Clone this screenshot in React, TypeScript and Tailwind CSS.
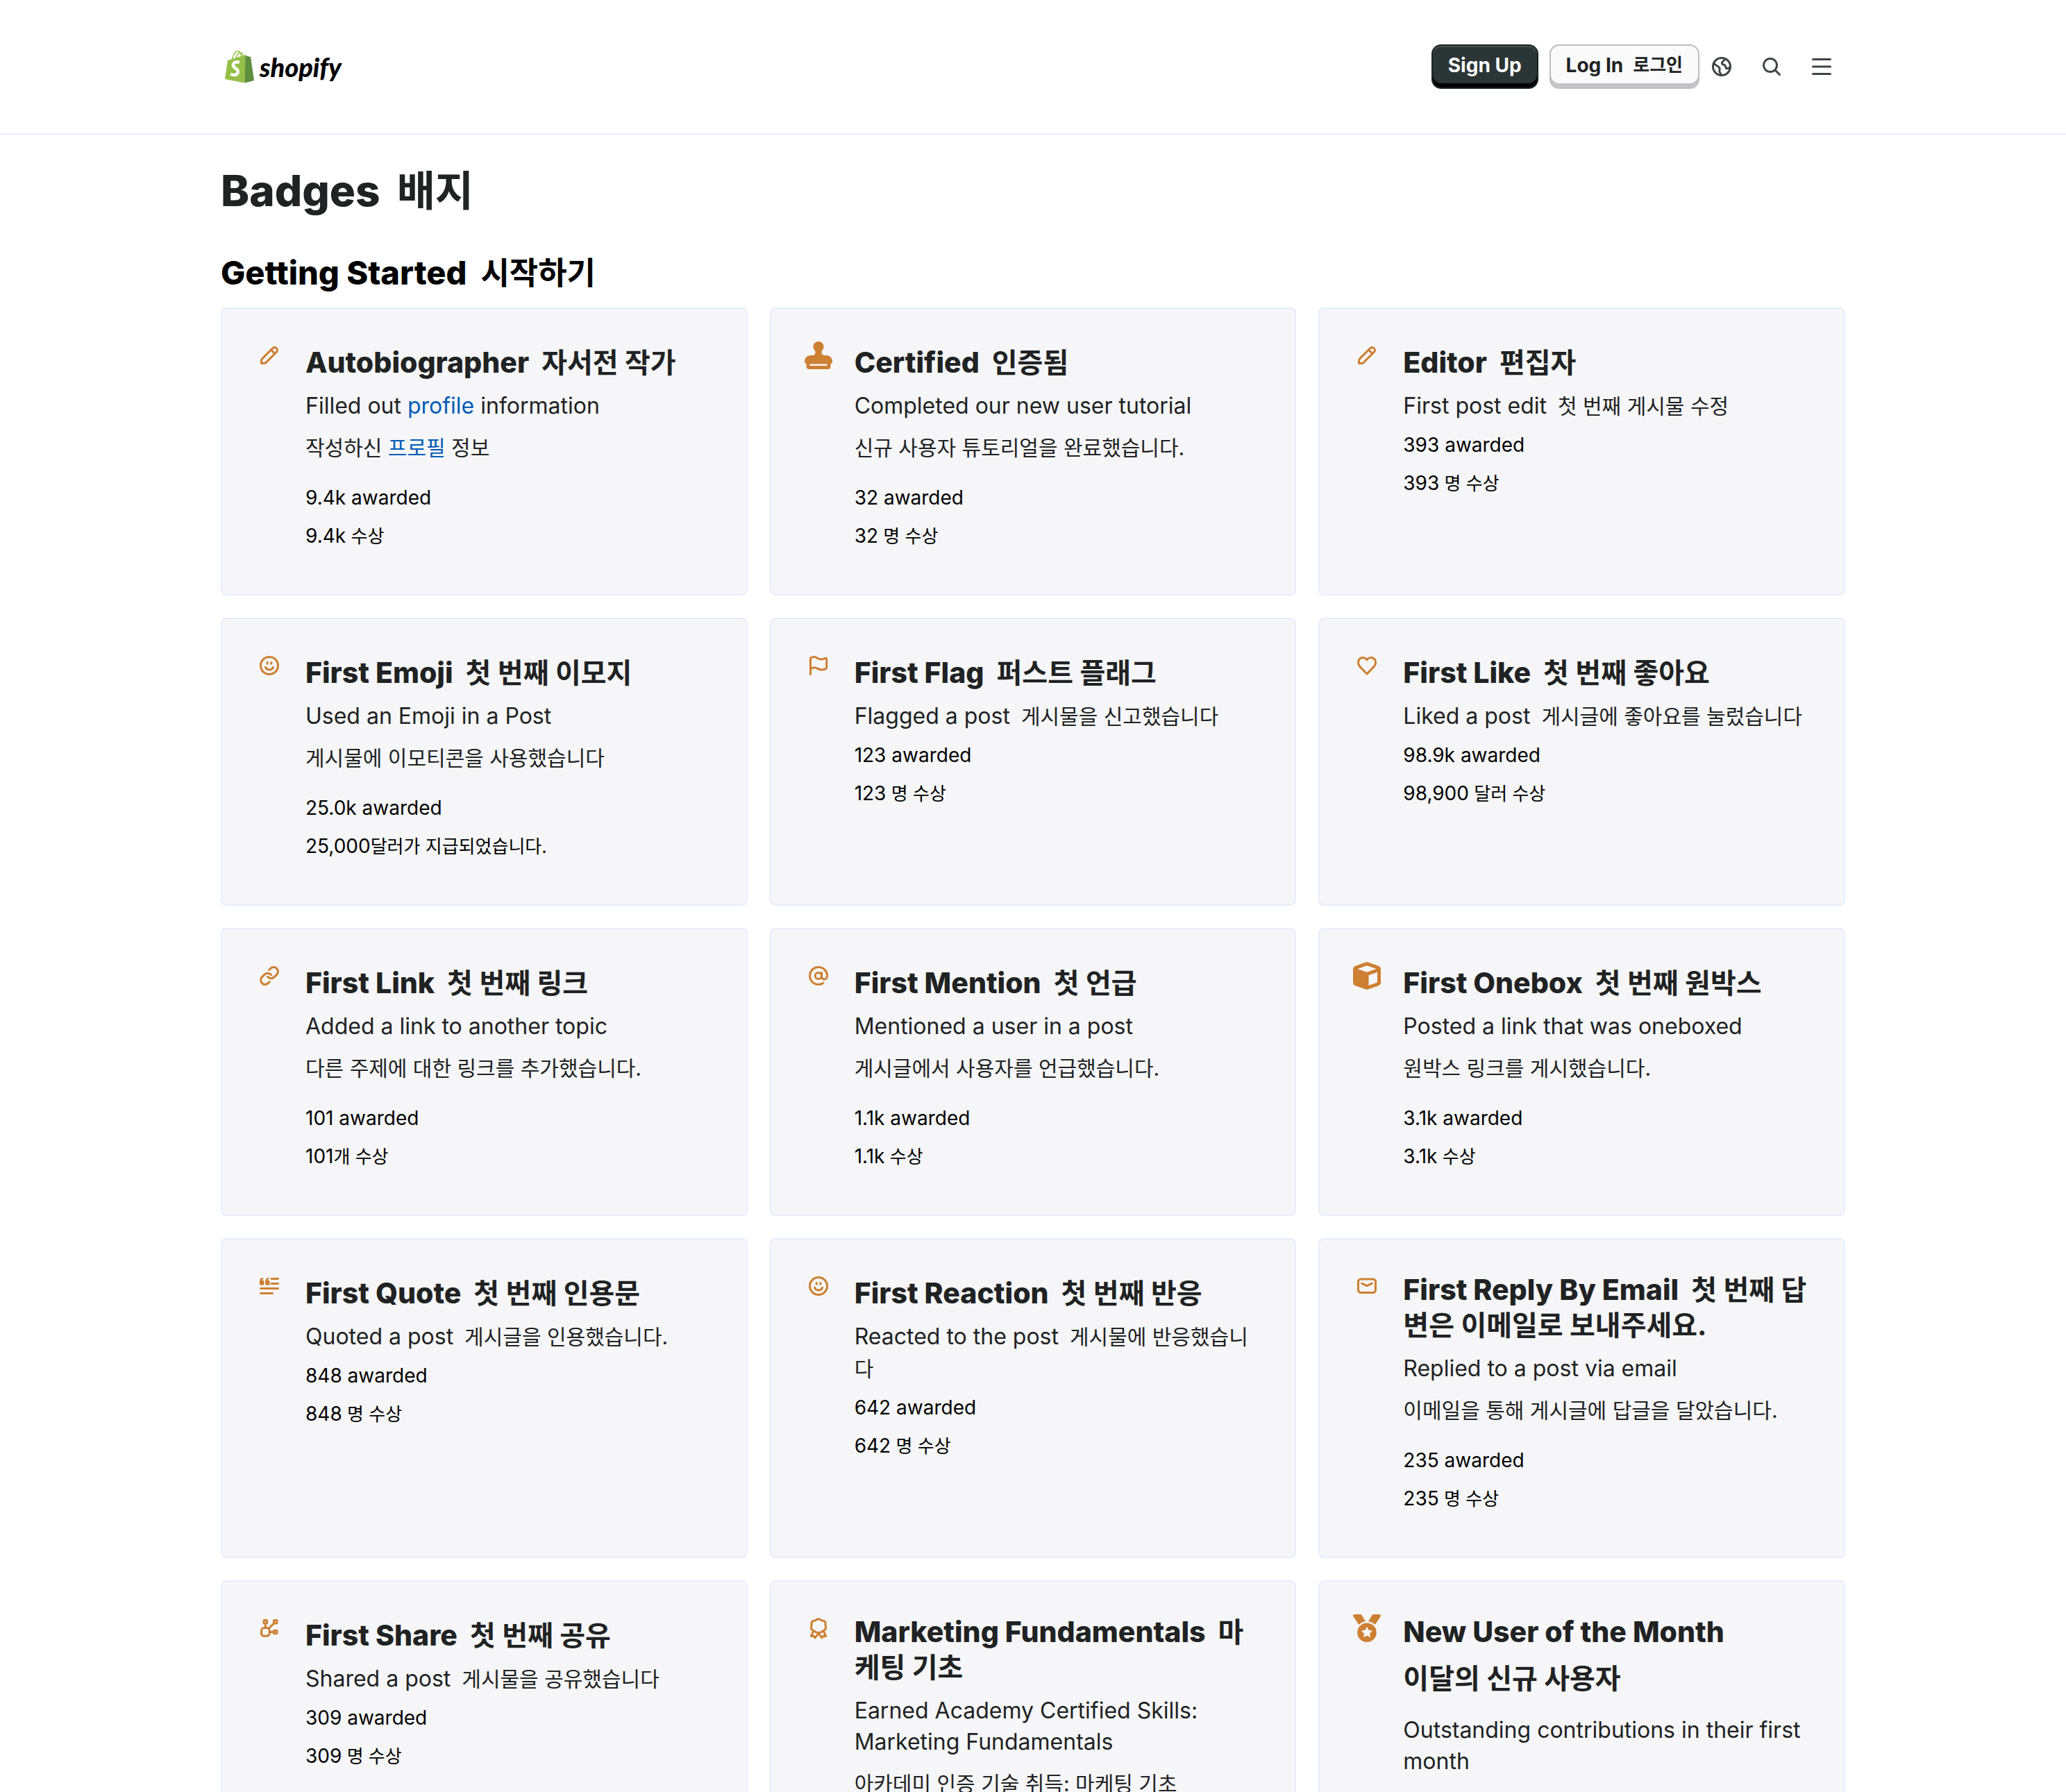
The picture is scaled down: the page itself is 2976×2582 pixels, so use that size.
import type { ReactNode } from "react";
import { FaCube, FaMedal, FaStamp } from "react-icons/fa6";

type IconName =
  | "pencil"
  | "stamp"
  | "smile"
  | "flag"
  | "heart"
  | "link"
  | "at"
  | "cube"
  | "quote"
  | "email"
  | "share"
  | "award"
  | "medal";

interface Badge {
  icon: IconName;
  title: string;
  titleKo: string;
  titleBlock?: boolean;
  text: ReactNode;
  textKo?: ReactNode;
  // translation sits in its own paragraph instead of following the text
  textBlock?: boolean;
  count?: string;
  countKo?: string;
  unitKo?: string;
}

const badges: Badge[] = [
  {
    icon: "pencil",
    title: "Autobiographer",
    titleKo: "자서전 작가",
    text: (
      <>
        Filled out <a href="#profile" className="text-[#005bb5]">profile</a> information
      </>
    ),
    textKo: (
      <>
        작성하신 <a href="#profile" className="text-[#005bb5]">프로필</a> 정보
      </>
    ),
    textBlock: true,
    count: "9.4k",
    unitKo: " 수상",
  },
  {
    icon: "stamp",
    title: "Certified",
    titleKo: "인증됨",
    text: "Completed our new user tutorial",
    textKo: "신규 사용자 튜토리얼을 완료했습니다.",
    textBlock: true,
    count: "32",
    unitKo: " 명 수상",
  },
  {
    icon: "pencil",
    title: "Editor",
    titleKo: "편집자",
    text: "First post edit",
    textKo: "첫 번째 게시물 수정",
    count: "393",
    unitKo: " 명 수상",
  },
  {
    icon: "smile",
    title: "First Emoji",
    titleKo: "첫 번째 이모지",
    text: "Used an Emoji in a Post",
    textKo: "게시물에 이모티콘을 사용했습니다",
    textBlock: true,
    count: "25.0k",
    countKo: "25,000",
    unitKo: "달러가 지급되었습니다.",
  },
  {
    icon: "flag",
    title: "First Flag",
    titleKo: "퍼스트 플래그",
    text: "Flagged a post",
    textKo: "게시물을 신고했습니다",
    count: "123",
    unitKo: " 명 수상",
  },
  {
    icon: "heart",
    title: "First Like",
    titleKo: "첫 번째 좋아요",
    text: "Liked a post",
    textKo: "게시글에 좋아요를 눌렀습니다",
    count: "98.9k",
    countKo: "98,900",
    unitKo: " 달러 수상",
  },
  {
    icon: "link",
    title: "First Link",
    titleKo: "첫 번째 링크",
    text: "Added a link to another topic",
    textKo: "다른 주제에 대한 링크를 추가했습니다.",
    textBlock: true,
    count: "101",
    unitKo: "개 수상",
  },
  {
    icon: "at",
    title: "First Mention",
    titleKo: "첫 언급",
    text: "Mentioned a user in a post",
    textKo: "게시글에서 사용자를 언급했습니다.",
    textBlock: true,
    count: "1.1k",
    unitKo: " 수상",
  },
  {
    icon: "cube",
    title: "First Onebox",
    titleKo: "첫 번째 원박스",
    text: "Posted a link that was oneboxed",
    textKo: "원박스 링크를 게시했습니다.",
    textBlock: true,
    count: "3.1k",
    unitKo: " 수상",
  },
  {
    icon: "quote",
    title: "First Quote",
    titleKo: "첫 번째 인용문",
    text: "Quoted a post",
    textKo: "게시글을 인용했습니다.",
    count: "848",
    unitKo: " 명 수상",
  },
  {
    icon: "smile",
    title: "First Reaction",
    titleKo: "첫 번째 반응",
    text: "Reacted to the post",
    textKo: "게시물에 반응했습니다",
    count: "642",
    unitKo: " 명 수상",
  },
  {
    icon: "email",
    title: "First Reply By Email",
    titleKo: "첫 번째 답변은 이메일로 보내주세요.",
    text: "Replied to a post via email",
    textKo: "이메일을 통해 게시글에 답글을 달았습니다.",
    textBlock: true,
    count: "235",
    unitKo: " 명 수상",
  },
  {
    icon: "share",
    title: "First Share",
    titleKo: "첫 번째 공유",
    text: "Shared a post",
    textKo: "게시물을 공유했습니다",
    count: "309",
    unitKo: " 명 수상",
  },
  {
    icon: "award",
    title: "Marketing Fundamentals",
    titleKo: "마케팅 기초",
    text: "Earned Academy Certified Skills: Marketing Fundamentals",
    textKo: "아카데미 인증 기술 취득: 마케팅 기초",
    textBlock: true,
  },
  {
    icon: "medal",
    title: "New User of the Month",
    titleKo: "이달의 신규 사용자",
    titleBlock: true,
    text: "Outstanding contributions in their first month",
  },
];

function LineIcon({ children }: { children: ReactNode }) {
  return (
    <svg
      viewBox="0 0 20 20"
      className="size-10"
      fill="none"
      stroke="currentColor"
      strokeWidth="1.5"
      strokeLinecap="round"
      strokeLinejoin="round"
      aria-hidden="true"
    >
      {children}
    </svg>
  );
}

function BadgeIcon({ name }: { name: IconName }) {
  switch (name) {
    case "stamp":
      return <FaStamp className="size-10" />;
    case "cube":
      return <FaCube className="size-10" />;
    case "medal":
      return <FaMedal className="size-10" />;
    case "pencil":
      return (
        <LineIcon>
          <path
            fill="currentColor"
            stroke="none"
            fillRule="evenodd"
            d="M15.655 4.344a2.695 2.695 0 0 0-3.81 0l-.599.599-.009-.009-1.06 1.06.008.01-5.88 5.88a2.75 2.75 0 0 0-.805 1.944v1.922a.75.75 0 0 0 .75.75h1.922a2.75 2.75 0 0 0 1.944-.806l7.54-7.54a2.695 2.695 0 0 0 0-3.81Zm-4.409 2.72-5.88 5.88a1.25 1.25 0 0 0-.366.884v1.172h1.172c.331 0 .65-.132.883-.366l5.88-5.88-1.689-1.69Zm2.75.629.599-.599a1.195 1.195 0 1 0-1.69-1.689l-.598.599 1.69 1.689Z"
          />
        </LineIcon>
      );
    case "smile":
      return (
        <LineIcon>
          <circle cx="10" cy="10" r="6.25" />
          <path d="M8.6 7.7v.9M11.4 7.7v.9M7.2 11.2c.5 1.1 1.6 1.8 2.8 1.8s2.3-.7 2.8-1.8" />
        </LineIcon>
      );
    case "flag":
      return (
        <LineIcon>
          <path d="M4.25 16.25V4.6c1.6-1.1 3.5-1 5 0 1.3.9 2.6 1.3 4.3.6l1.3-.5c.5-.2 1 .1 1 .7v6c0 .4-.2.7-.6.9-2.2 1.1-4 1-5.8-.1-1.7-1.1-3.6-1.1-5.2.3" />
        </LineIcon>
      );
    case "heart":
      return (
        <LineIcon>
          <path d="M10 16 5 10.8c-1.7-1.8-1.7-4.2-.3-5.6s3.6-1.3 4.8.1l.5.6.5-.6c1.2-1.4 3.4-1.5 4.8-.1s1.4 3.8-.3 5.6Z" />
        </LineIcon>
      );
    case "link":
      return (
        <LineIcon>
          <g transform="translate(2.5 2.5) scale(.625)" strokeWidth="2.4">
            <path d="M10 13a5 5 0 0 0 7.54.54l3-3a5 5 0 0 0-7.07-7.07l-1.72 1.71" />
            <path d="M14 11a5 5 0 0 0-7.54-.54l-3 3a5 5 0 0 0 7.07 7.07l1.71-1.71" />
          </g>
        </LineIcon>
      );
    case "at":
      return (
        <LineIcon>
          <circle cx="9.9" cy="10" r="2.3" />
          <path d="M12.3 7.6v3.2c0 1 .8 1.7 1.9 1.7 1.3 0 2.05-1.1 2.05-2.5A6.25 6.25 0 1 0 10 16.25c1.3 0 2.5-.4 3.4-1" />
        </LineIcon>
      );
    case "quote":
      return (
        <LineIcon>
          <path d="M11.5 4.75h4.75M11.5 8.25h4.75M3.75 11.75h12.5M3.75 15.25h8.5" />
          <path
            fill="currentColor"
            stroke="none"
            d="M5.6 4v1c-.5.1-.8.4-.8.9h.5a.9.9 0 0 1 .9.9v1.7a.9.9 0 0 1-.9.9H3.9a.9.9 0 0 1-.9-.9V6.6C3 5 4 4 5.6 4Zm4.1 0v1c-.5.1-.8.4-.8.9h.5a.9.9 0 0 1 .9.9v1.7a.9.9 0 0 1-.9.9H8a.9.9 0 0 1-.9-.9V6.6C7.1 5 8.1 4 9.7 4Z"
          />
        </LineIcon>
      );
    case "email":
      return (
        <LineIcon>
          <rect x="3.75" y="5" width="12.5" height="9.75" rx="2" />
          <path d="m6.3 8.1 3.7 1.7 3.7-1.7" />
        </LineIcon>
      );
    case "share":
      return (
        <LineIcon>
          <rect x="4.25" y="9.8" width="5.8" height="5.8" rx="1.9" />
          <rect x="6" y="4.2" width="2.3" height="2.3" rx=".5" />
          <rect x="13.2" y="4.2" width="2.3" height="2.3" rx=".5" />
          <rect x="13.2" y="11.6" width="2.3" height="2.3" rx=".5" />
          <path d="M7.15 6.7v3M9.6 10.2l3.7-3.7M10.2 12.7h3" />
        </LineIcon>
      );
    case "award":
      return (
        <LineIcon>
          <path d="M10 3.4c1 0 1.4.8 2.3 1s2 .2 2.5 1.1 0 1.6.2 2.5.6 1.6.1 2.5-1.3.9-2 1.5-1.5 1.3-3.1 1.3-2.4-.7-3.1-1.3-1.5-.6-2-1.5-.1-1.6.1-2.5-.3-1.600.2-2.500 1.600-.9 2.500-1.100 1.300-1 2.300-1Z" />
          <path d="m6.3 12.3-1.7 3.4 2-.1 1 1.3L10 13.5l2.4 3.4 1-1.3 2 .1-1.7-3.4" />
        </LineIcon>
      );
  }
}

function ShopifyLogo() {
  return (
    <a href="#home" aria-label="Shopify" className="flex items-center gap-2">
      <svg viewBox="0 0 42 47" className="h-12 w-[42px]" aria-hidden="true">
        <path
          fill="none"
          stroke="#95bf47"
          strokeWidth="1.5"
          d="M10.5 13C12 5 16 1 19 1.2c3 .2 4.5 4.5 4.5 10M15.5 12C17 6.5 20 3.3 22.5 3.5c2.5.2 4 3 4.2 7"
        />
        <path fill="#95bf47" d="M4 14.5 30 6.5l-1.5 40.5L0 41.5Z" />
        <path fill="#5e8e3e" d="m29.5 6.5 3 2.3 4.5.5L42 43.5 28.5 47Z" />
        <path
          fill="none"
          stroke="#fff"
          strokeWidth="4.5"
          d="M20.8 17.5c-4-1.6-9-.2-9 4 0 4.5 7 4.3 7 9 0 5-6 6.5-10.5 3.5"
        />
      </svg>
      <span className="font-[Lato,sans-serif] text-[38px] leading-[44px] font-black text-black italic">shopify</span>
    </a>
  );
}

function Header() {
  return (
    <header className="border-b-2 border-[#e8edfc]">
      <div className="mx-auto flex h-48 w-full max-w-[2340px] items-center justify-between pr-3.5 pl-1.5">
        <ShopifyLogo />
        <div className="flex items-center">
          <button
            type="button"
            className="mr-4 h-16 rounded-[14px] border-2 border-[#1a2222] bg-[#2c3536] px-[22px] pb-1 text-[28px] leading-9 font-bold text-white shadow-[inset_0_-6px_0_#000,inset_0_2px_0_#4c5556]"
          >
            Sign Up
          </button>
          <button
            type="button"
            className="mr-3 flex h-16 items-center gap-3.5 rounded-[14px] border-2 border-[#bcbdc3] bg-[#fafafa] px-[22px] pb-1 text-[28px] leading-9 font-bold text-[#202223] shadow-[inset_0_-6px_0_#c4c4c6]"
          >
            <span>Log In</span>
            <span className="text-[26px] font-semibold">로그인</span>
          </button>
          <div className="flex gap-8 text-[#404346]">
            <button type="button" aria-label="Language" className="size-10">
              <LineIcon>
                <circle cx="10" cy="10" r="6.25" />
                <path d="M4.5 7.5c.8 2 3.5 2 4 3.5.4 1.4-.7 2 .2 3.2.5.7.8 1.2.8 2M12.5 4.5c-.3 1.3-2.3 1.5-2.3 3 0 1.3 1.6.9 2.3 1.7.7.9.2 2.2 1.2 2.2.9 0 1.7-.4 2.5-1" />
              </LineIcon>
            </button>
            <button type="button" aria-label="Search" className="size-10">
              <LineIcon>
                <circle cx="9" cy="9" r="4.75" />
                <path d="m12.5 12.5 3.25 3.25" />
              </LineIcon>
            </button>
            <button type="button" aria-label="Menu" className="size-10">
              <LineIcon>
                <path d="M3.75 4.75h12.5M3.75 10h12.5M3.75 15.25h12.5" />
              </LineIcon>
            </button>
          </div>
        </div>
      </div>
    </header>
  );
}

function BadgeCard({ badge }: { badge: Badge }) {
  return (
    <article className="flex rounded-lg border-2 border-[#e8edfc] bg-[#f6f6f8] px-12 pt-[47px] pb-12">
      <div className="flex h-10 w-10 shrink-0 justify-center text-[#cd7f32]">
        <BadgeIcon name={badge.icon} />
      </div>
      <div className="ml-8 min-w-0 flex-1">
        <h3 className="mb-3.5 flex min-h-14 flex-col justify-end text-[41px] leading-[51px] font-extrabold text-[#202223]">
          {badge.titleBlock ? (
            <>
              <span>{badge.title}</span>
              <span className="mt-4 mb-3 text-[40px] font-bold">{badge.titleKo}</span>
            </>
          ) : (
            <span>
              {badge.title}
              <span className="ml-[18px] text-[40px] font-bold">{badge.titleKo}</span>
            </span>
          )}
        </h3>
        <p className="text-[32px] leading-[45px] text-[#202223]">
          {badge.text}
          {!badge.textBlock && badge.textKo && <span className="ml-4 text-[30px]">{badge.textKo}</span>}
        </p>
        {badge.textBlock && (
          <p className="mt-4 mb-[30px] text-[30px] leading-[45px] text-[#202223]">{badge.textKo}</p>
        )}
        {badge.count && (
          <>
            <p className="mt-3.5 text-[28px] leading-[39px] text-black">{badge.count} awarded</p>
            <p className="my-4 text-[28px] leading-[39px] text-black">
              {badge.countKo ?? badge.count}
              <span className="text-[26px]">{badge.unitKo}</span>
            </p>
          </>
        )}
      </div>
    </article>
  );
}

export default function App() {
  return (
    <div className="min-h-screen bg-white font-[Inter,'Noto_Sans_CJK_KR',sans-serif]" lang="ko">
      <Header />
      <main className="mx-auto w-full max-w-[2340px]">
        <h1 className="pt-[41px] text-[62px] leading-[80px] font-extrabold text-[#202223]">
          Badges<span className="ml-6 text-[60px] font-bold">배지</span>
        </h1>
        <h2 className="mt-12 mb-[19px] text-[47px] leading-[60px] font-extrabold text-black">
          Getting Started<span className="ml-5 text-[45px] font-bold">시작하기</span>
        </h2>
        <div className="grid grid-cols-3 gap-8">
          {badges.map((badge) => (
            <BadgeCard key={badge.title} badge={badge} />
          ))}
        </div>
      </main>
    </div>
  );
}
